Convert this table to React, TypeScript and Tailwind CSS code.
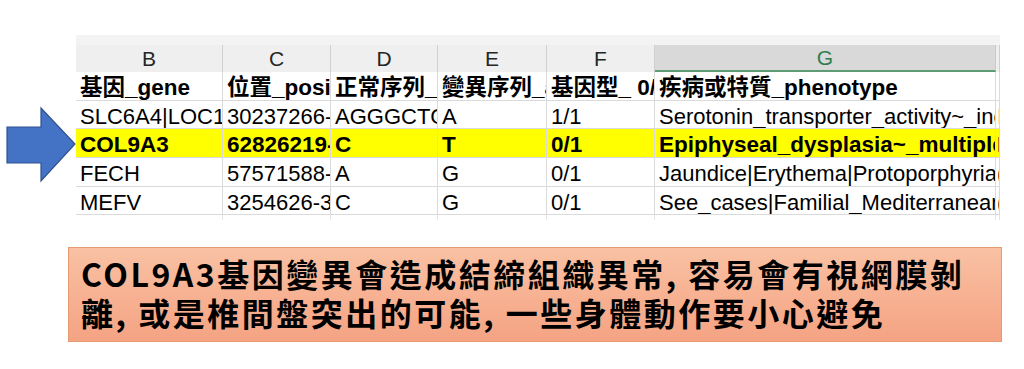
import React from "react";

const cols = [
  { key: "B", w: 147 },
  { key: "C", w: 108 },
  { key: "D", w: 107 },
  { key: "E", w: 109 },
  { key: "F", w: 108 },
  { key: "G", w: 341 },
  { key: "", w: 4 },
];

type Row = { cells: string[]; bold?: boolean; yellow?: boolean; h: number };

const rows: Row[] = [
  { cells: ["基因_gene", "位置_position", "正常序列_ref", "變異序列_alt", "基因型_ 0/1", "疾病或特質_phenotype", "："], bold: true, h: 29 },
  { cells: ["SLC6A4|LOC107985022", "30237266-30237267", "AGGGCTGGGG", "A", "1/1", "Serotonin_transporter_activity~_increased", "I"], h: 28 },
  { cells: ["COL9A3", "62826219-62826219", "C", "T", "0/1", "Epiphyseal_dysplasia~_multiple", "I"], bold: true, yellow: true, h: 29 },
  { cells: ["FECH", "57571588-57571588", "A", "G", "0/1", "Jaundice|Erythema|Protoporphyria", "("], h: 29 },
  { cells: ["MEFV", "3254626-3254626", "C", "G", "0/1", "See_cases|Familial_Mediterranean", "("], h: 28 },
];

export default function App() {
  return (
    <div className="w-[1024px] h-[369px] bg-white overflow-hidden pt-[35px]">
      <div className="flex">
        <div className="w-[76px] shrink-0">
          <svg width="76" height="185" viewBox="0 0 76 185">
            <polygon
              points="7,92 41,92 41,73 75,109 41,146 41,128 7,128"
              fill="#4472c4"
              stroke="#2f528f"
              strokeWidth="1.2"
            />
          </svg>
        </div>
        <div className="w-[924px] shrink-0" style={{ fontFamily: '"Liberation Sans", "Noto Sans CJK TC", sans-serif' }}>
          <div className="h-[10px] bg-[#f3f3f3]" />
          <div className="flex h-[27px] bg-[#efefef]">
            {cols.map((c, i) => (
              <div
                key={i}
                className={
                  c.key === "G"
                    ? "flex items-center justify-center bg-[#d9d9d9] border-b-2 border-[#5e9c76] text-[#2e7d4f] text-[21px] border-r border-r-[#c9c9c9]"
                    : "flex items-center justify-center border-r border-[#d0d0d0] text-[#262626] text-[21px]"
                }
                style={{ width: c.w }}
              >
                {c.key}
              </div>
            ))}
          </div>
          {rows.map((r, ri) => (
            <div
              key={ri}
              className={
                "flex border-b border-[#dadada] " + (r.yellow ? "bg-[#ffff00]" : "bg-white")
              }
              style={{ height: r.h }}
            >
              {r.cells.map((t, ci) => (
                <div
                  key={ci}
                  className={
                    "overflow-hidden whitespace-nowrap flex items-center pt-[3px] text-black border-r border-[#dadada] " +
                    (ci === 6 ? "pl-[1px] " : "pl-[4px] ") +
                    (r.bold ? "font-bold text-[22.5px]" : "font-normal text-[22px]")
                  }
                  style={{ width: cols[ci].w }}
                >
                  {t}
                </div>
              ))}
            </div>
          ))}
          <div className="flex h-[5px]">
            {cols.map((c, i) => (
              <div key={i} className="border-r border-[#e6e6e6]" style={{ width: c.w }} />
            ))}
          </div>
        </div>
      </div>
      <div
        className="ml-[68px] mt-[27px] w-[934px] h-[95px] border border-[#e59a72] bg-gradient-to-b from-[#f9c1a3] to-[#f4a383] pl-[12px] pt-[6px] text-[32px] leading-[39px] tracking-[2.5px] font-semibold text-black"
        style={{ fontFamily: '"Noto Sans CJK TC", sans-serif' }}
      >
        <div className="whitespace-nowrap">COL9A3基因變異會造成結締組織異常, 容易會有視網膜剝</div>
        <div className="whitespace-nowrap">離, 或是椎間盤突出的可能, 一些身體動作要小心避免</div>
      </div>
    </div>
  );
}
